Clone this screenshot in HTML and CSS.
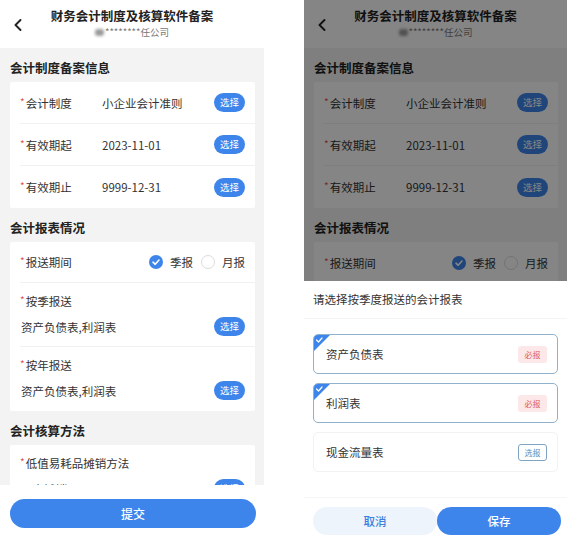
FILE: index.html
```html
<!DOCTYPE html>
<html lang="zh-CN">
<head>
<meta charset="utf-8">
<title>财务会计制度及核算软件备案</title>
<link rel="stylesheet" href="styles.css">
</head>
<body>
<div class="screens">

  <div class="phone phone-left">
    <header class="nav">
      <svg class="back" viewBox="0 0 8 12" width="8" height="12"><polyline points="6.5,1 1.5,6 6.5,11"/></svg>
      <div class="nav-titles">
        <div class="nav-title">财务会计制度及核算软件备案</div>
        <div class="nav-sub"><span class="smudge"></span>********任公司</div>
      </div>
      <span></span>
    </header>
    <main class="content">
      <h2 class="sec-title">会计制度备案信息</h2>
      <section class="card">
        <div class="row">
          <span class="label"><i>*</i>会计制度</span>
          <span class="value">小企业会计准则</span>
          <button class="pick">选择</button>
        </div>
        <div class="row">
          <span class="label"><i>*</i>有效期起</span>
          <span class="value">2023-11-01</span>
          <button class="pick">选择</button>
        </div>
        <div class="row">
          <span class="label"><i>*</i>有效期止</span>
          <span class="value">9999-12-31</span>
          <button class="pick">选择</button>
        </div>
      </section>

      <h2 class="sec-title">会计报表情况</h2>
      <section class="card">
        <div class="row row-radio">
          <span class="label"><i>*</i>报送期间</span>
          <div class="radios">
            <span class="radio checked"><svg viewBox="0 0 14 14" width="14" height="14"><polyline points="4,7.2 6.2,9.3 10,5"/></svg></span>
            <span class="radio-text">季报</span>
            <span class="radio"></span>
            <span class="radio-text">月报</span>
          </div>
        </div>
        <div class="stack">
          <div class="label"><i>*</i>按季报送</div>
          <div class="stack-line">
            <span class="value">资产负债表,利润表</span>
            <button class="pick">选择</button>
          </div>
        </div>
        <div class="stack">
          <div class="label"><i>*</i>按年报送</div>
          <div class="stack-line">
            <span class="value">资产负债表,利润表</span>
            <button class="pick">选择</button>
          </div>
        </div>
      </section>

      <h2 class="sec-title">会计核算方法</h2>
      <section class="card">
        <div class="stack">
          <div class="label"><i>*</i>低值易耗品摊销方法</div>
          <div class="stack-line">
            <span class="value">一次摊销</span>
            <button class="pick">选择</button>
          </div>
        </div>
      </section>
    </main>
    <footer class="foot">
      <button class="submit">提交</button>
    </footer>
  </div>

  <div class="phone phone-right">
    <header class="nav">
      <svg class="back" viewBox="0 0 8 12" width="8" height="12"><polyline points="6.5,1 1.5,6 6.5,11"/></svg>
      <div class="nav-titles">
        <div class="nav-title">财务会计制度及核算软件备案</div>
        <div class="nav-sub"><span class="smudge"></span>********任公司</div>
      </div>
      <span></span>
    </header>
    <main class="content">
      <h2 class="sec-title">会计制度备案信息</h2>
      <section class="card">
        <div class="row">
          <span class="label"><i>*</i>会计制度</span>
          <span class="value">小企业会计准则</span>
          <button class="pick">选择</button>
        </div>
        <div class="row">
          <span class="label"><i>*</i>有效期起</span>
          <span class="value">2023-11-01</span>
          <button class="pick">选择</button>
        </div>
        <div class="row">
          <span class="label"><i>*</i>有效期止</span>
          <span class="value">9999-12-31</span>
          <button class="pick">选择</button>
        </div>
      </section>

      <h2 class="sec-title">会计报表情况</h2>
      <section class="card">
        <div class="row row-radio">
          <span class="label"><i>*</i>报送期间</span>
          <div class="radios">
            <span class="radio checked"><svg viewBox="0 0 14 14" width="14" height="14"><polyline points="4,7.2 6.2,9.3 10,5"/></svg></span>
            <span class="radio-text">季报</span>
            <span class="radio"></span>
            <span class="radio-text">月报</span>
          </div>
        </div>
      </section>
    </main>

    <div class="mask"></div>
    <div class="sheet">
      <div class="sheet-title">请选择按季度报送的会计报表</div>
      <div class="options">
        <div class="option selected">
          <span class="corner"><svg viewBox="0 0 16 16" width="16" height="16"><polyline points="2.5,5 4.5,7 8,3"/></svg></span>
          <span class="opt-name">资产负债表</span>
          <span class="tag tag-must">必报</span>
        </div>
        <div class="option selected">
          <span class="corner"><svg viewBox="0 0 16 16" width="16" height="16"><polyline points="2.5,5 4.5,7 8,3"/></svg></span>
          <span class="opt-name">利润表</span>
          <span class="tag tag-must">必报</span>
        </div>
        <div class="option">
          <span class="opt-name">现金流量表</span>
          <span class="tag tag-opt">选报</span>
        </div>
      </div>
      <div class="actions">
        <button class="btn-cancel">取消</button>
        <button class="btn-save">保存</button>
      </div>
    </div>
  </div>

</div>
</body>
</html>
```

FILE: styles.css
```css
* { box-sizing: border-box; }

html, body {
  margin: 0;
  padding: 0;
  background: #ffffff;
}

body {
  font-family: "Noto Sans CJK SC", "Noto Sans", sans-serif;
  color: #333;
}

.screens {
  display: flex;
  gap: 40px;
  width: 567px;
  height: 542px;
}

.phone {
  position: relative;
  width: 264px;
  height: 542px;
  display: flex;
  flex-direction: column;
  overflow: hidden;
  background: #fff;
}

.phone-right { width: 263px; }

/* nav */
.nav {
  height: 48px;
  flex: none;
  display: grid;
  grid-template-columns: 36px 1fr 36px;
  align-items: start;
  background: #fff;
}

.back {
  margin: 19px 0 0 14px;
  fill: none;
  stroke: #222;
  stroke-width: 1.9;
  stroke-linecap: round;
  stroke-linejoin: round;
}

.nav-titles {
  padding-top: 7px;
  text-align: center;
}

.nav-title {
  font-size: 12.5px;
  line-height: 18px;
  font-weight: 700;
  color: #222;
  white-space: nowrap;
}

.nav-sub {
  font-size: 9.5px;
  line-height: 14px;
  color: #777;
  display: flex;
  justify-content: center;
  align-items: center;
  gap: 1px;
}

.smudge {
  display: inline-block;
  width: 9px;
  height: 7px;
  border-radius: 3px;
  background: #9a9a9a;
  filter: blur(1.5px);
}

/* content */
.content {
  flex: 1;
  overflow: hidden;
  background: #f3f3f3;
  padding: 0 9px 0 10px;
}

.sec-title {
  margin: 0;
  padding: 10px 0 4px;
  font-size: 12.5px;
  line-height: 20px;
  font-weight: 700;
  color: #222;
}

.card {
  background: #fff;
  padding-left: 10px;
  border-radius: 2px;
}

.row {
  height: 42px;
  display: flex;
  align-items: center;
  padding-right: 10px;
  border-bottom: 1px solid #f1f1f1;
}

.card > :last-child { border-bottom: none; }

.label {
  width: 82px;
  flex: none;
  font-size: 11.5px;
  color: #333;
  white-space: nowrap;
}

.label i {
  font-style: normal;
  color: #e05555;
  font-size: 10px;
  margin-right: 1px;
  position: relative;
  top: -2px;
}

.value {
  flex: 1;
  font-size: 11.5px;
  color: #333;
  white-space: nowrap;
}

.pick {
  flex: none;
  width: 31px;
  height: 19px;
  padding: 0;
  border: none;
  border-radius: 10px;
  background: #3d85ea;
  color: #fff;
  font-family: inherit;
  font-size: 9.5px;
  line-height: 19px;
}

.row-radio { height: 41px; }

.radios {
  margin-left: auto;
  display: flex;
  align-items: center;
}

.radio {
  width: 14px;
  height: 14px;
  border-radius: 50%;
  border: 1px solid #dcdcdc;
  background: #fff;
  display: inline-flex;
}

.radio.checked {
  border: none;
  background: #3d85ea;
}

.radio svg {
  fill: none;
  stroke: #fff;
  stroke-width: 1.6;
  stroke-linecap: round;
  stroke-linejoin: round;
}

.radio-text {
  font-size: 11.5px;
  color: #333;
  margin: 0 8px 0 7px;
}

.radio-text:last-child { margin-right: 0; }

.stack {
  height: 64px;
  padding: 9px 10px 0 0;
  border-bottom: 1px solid #f1f1f1;
}

.stack .label {
  line-height: 18px;
  width: auto;
}

.stack-line {
  display: flex;
  align-items: center;
  height: 19px;
  margin-top: 6px;
}

.stack-line .value { margin-left: 1px; }

/* footer */
.foot {
  height: 57px;
  flex: none;
  background: #fff;
  padding: 14px 8px 0 10px;
}

.submit {
  width: 100%;
  height: 29px;
  border: none;
  border-radius: 15px;
  background: #3d85ea;
  color: #fff;
  font-family: inherit;
  font-size: 12px;
  font-weight: 500;
}

/* modal */
.mask {
  position: absolute;
  inset: 0;
  background: rgba(0, 0, 0, 0.48);
}

.sheet {
  position: absolute;
  left: 0;
  right: 0;
  bottom: 0;
  height: 261px;
  background: #fff;
  display: flex;
  flex-direction: column;
}

.sheet-title {
  height: 38px;
  line-height: 37px;
  padding-left: 9px;
  font-size: 11.5px;
  color: #333;
  border-bottom: 1px solid #f4f4f4;
}

.options {
  padding: 15px 9px 0 9px;
  display: flex;
  flex-direction: column;
  gap: 9px;
}

.option {
  position: relative;
  height: 40px;
  display: flex;
  align-items: center;
  padding: 0 10px 0 12px;
  border: 1px solid #f2f2f2;
  border-radius: 5px;
  overflow: hidden;
}

.option.selected { border-color: #8fb1cc; }

.corner {
  position: absolute;
  left: 0;
  top: 0;
  width: 16px;
  height: 16px;
  background: #3d85ea;
  clip-path: polygon(0 0, 100% 0, 0 100%);
}

.corner svg {
  display: block;
  fill: none;
  stroke: #fff;
  stroke-width: 1.2;
  stroke-linecap: round;
  stroke-linejoin: round;
}

.opt-name {
  flex: 1;
  font-size: 11.5px;
  color: #333;
}

.tag {
  width: 29px;
  height: 17px;
  border-radius: 3px;
  font-size: 8px;
  line-height: 17px;
  text-align: center;
}

.tag-must {
  background: #fde8e9;
  color: #de5b5b;
}

.tag-opt {
  background: #fff;
  border: 1px solid #7fa4c4;
  line-height: 15px;
  color: #5e8db8;
}

.actions {
  margin-top: 25px;
  border-top: 1px solid #f5f5f5;
  padding: 9px 6px 0 9px;
  display: flex;
}

.actions button {
  flex: 1;
  height: 28px;
  border: none;
  border-radius: 14px;
  font-family: inherit;
  font-size: 11.5px;
  font-weight: 500;
}

.btn-cancel {
  background: #eef4fb;
  color: #3d7fdf;
}

.btn-save {
  background: #3d85ea;
  color: #fff;
}
```
